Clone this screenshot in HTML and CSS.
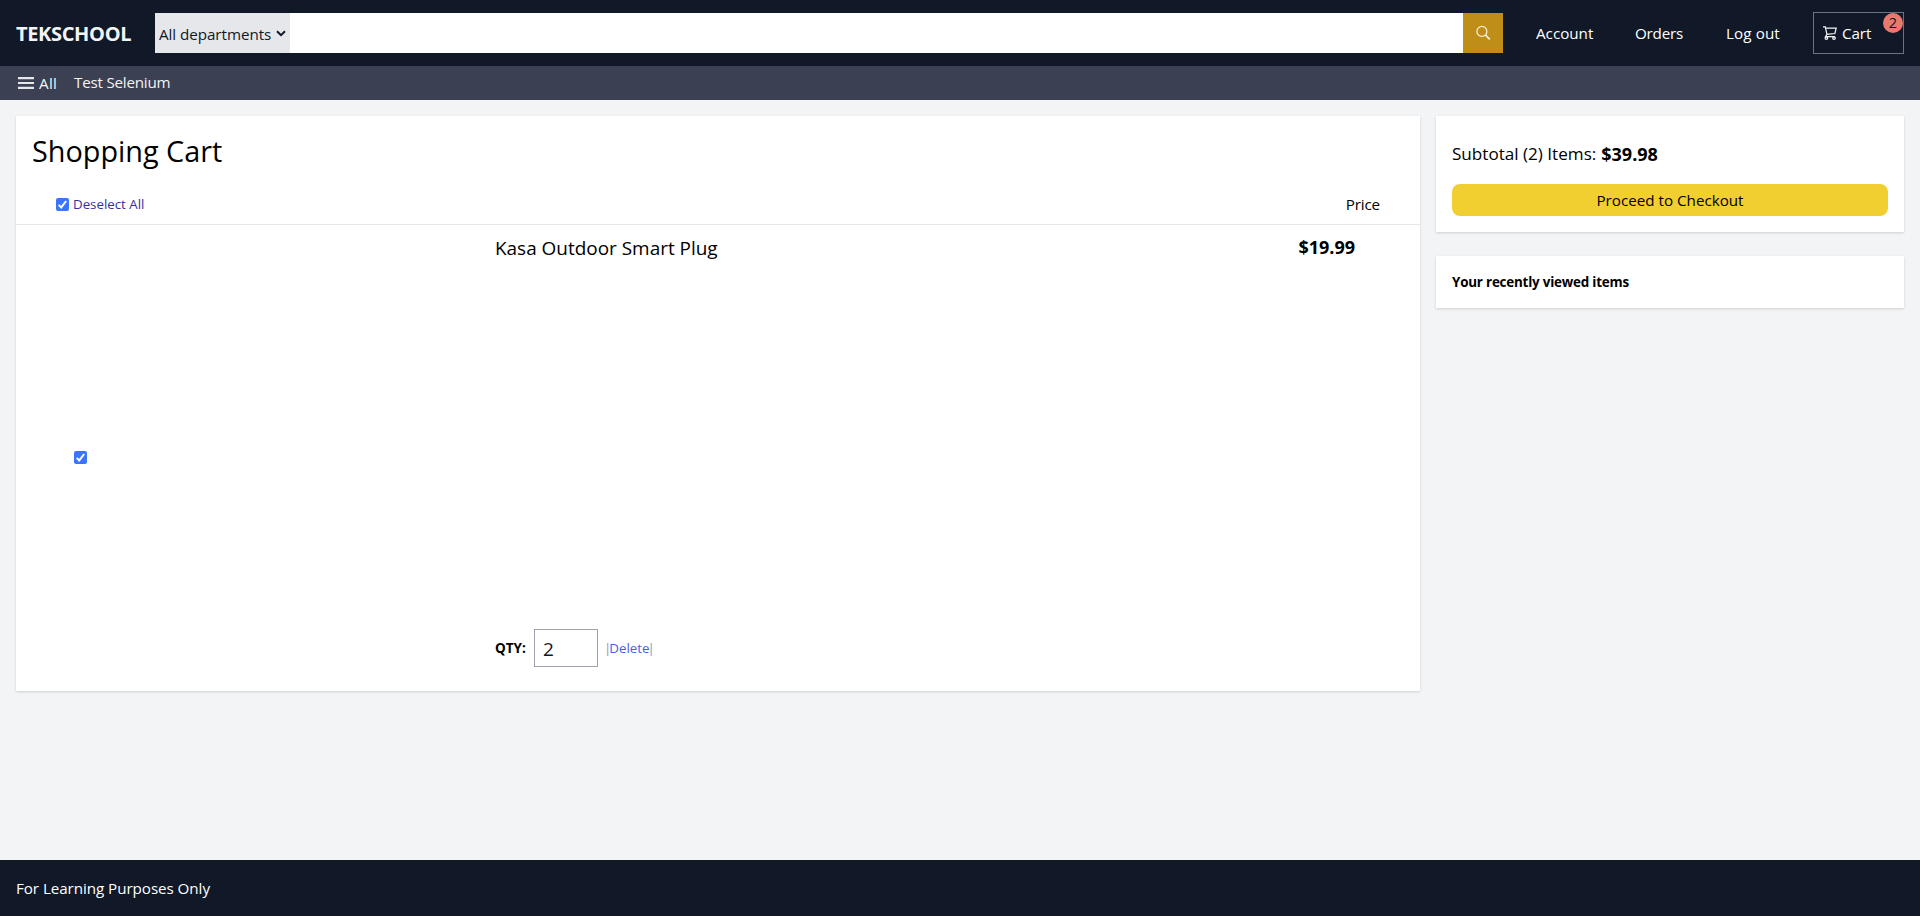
FILE: index.html
```html
<!DOCTYPE html>
<html lang="en">
<head>
<meta charset="utf-8">
<title>TEKSCHOOL</title>
<link rel="stylesheet" href="styles.css">
</head>
<body>
<header class="top">
  <a class="logo">TEKSCHOOL</a>
  <div class="search">
    <div class="dept"><span class="dept-label">All departments</span>
      <svg class="chevron" width="10" height="7" viewBox="0 0 10 7"><path d="M1 1.2 5 5.2 9 1.2" fill="none" stroke="#111827" stroke-width="2"/></svg>
    </div>
    <div class="search-field"></div>
    <button class="search-btn" aria-label="Search">
      <svg width="16" height="16" viewBox="0 0 16 16" fill="none" stroke="#f8f1de" stroke-width="1.2"><circle cx="6.9" cy="6.4" r="5"/><path d="M10.4 10 14.8 14.4" stroke-width="1.7"/></svg>
    </button>
  </div>
  <nav class="links">
    <a class="account">Account</a>
    <a class="orders">Orders</a>
    <a class="logout">Log out</a>
  </nav>
  <a class="cart">
    <svg width="14" height="14" viewBox="0 0 14 14" fill="none" stroke="#f3f4f6" stroke-width="1.2"><path d="M0 .9H2.3L4 8.7M2.7 2.2H13.2L11.9 7.5 3.8 8.3 2.6 10.6H12"/><circle cx="3.4" cy="12.1" r="1.3"/><circle cx="11" cy="12.1" r="1.3"/></svg>
    <span class="cart-label">Cart</span>
    <span class="badge">2</span>
  </a>
</header>
<div class="subnav">
  <svg width="16" height="12" viewBox="0 0 16 12" fill="#e5e7eb"><path d="M0 0h16v2.2H0zM0 4.9h16v2.2H0zM0 9.8h16v2.2H0z"/></svg>
  <span class="all">All</span>
  <span class="test">Test Selenium</span>
</div>
<main class="content">
  <section class="card basket">
    <h1 class="title">Shopping Cart</h1>
    <div class="head">
      <label class="deselect"><span class="check"><svg width="13" height="13" viewBox="0 0 13 13"><path d="M2.7 6.9 5.2 9.4 10.2 3" fill="none" stroke="#fff" stroke-width="2"/></svg></span><span class="deselect-label">Deselect All</span></label>
      <span class="price-head">Price</span>
    </div>
    <div class="item">
      <div class="pick"><span class="check"><svg width="13" height="13" viewBox="0 0 13 13"><path d="M2.7 6.9 5.2 9.4 10.2 3" fill="none" stroke="#fff" stroke-width="2"/></svg></span></div>
      <div class="details">
        <p class="name">Kasa Outdoor Smart Plug</p>
        <div class="qty"><span class="qty-label">QTY:</span><div class="qty-box">2</div><span class="delete"><span class="bar">|</span><span class="delete-label">Delete</span><span class="bar">|</span></span></div>
      </div>
      <p class="price">$19.99</p>
    </div>
  </section>
  <aside class="side">
    <section class="card summary">
      <p class="subtotal"><span class="subtotal-label">Subtotal (2) Items:</span><b>$39.98</b></p>
      <button class="checkout">Proceed to Checkout</button>
    </section>
    <section class="card recent">Your recently viewed items</section>
  </aside>
</main>
<footer class="footer">For Learning Purposes Only</footer>
</body>
</html>
```
FILE: styles.css
```css
* { box-sizing: border-box; margin: 0; }
body {
  height: 916px;
  display: flex;
  flex-direction: column;
  background: #f3f4f6;
  color: #000;
  font: 400 15.2px/24px "Open Sans", "Noto Sans", sans-serif;
}
button { border: 0; padding: 0; font: inherit; color: inherit; }
svg { display: block; flex: none; }
.top { height: 66px; flex: none; display: flex; align-items: center; padding: 0 16px; background: #111827; color: #fff; white-space: nowrap; }
.logo { width: 139px; padding-top: 2px; font-size: 20px; font-weight: 700; line-height: 28px; letter-spacing: -.34px; color: #f3f4f6; }
.search { width: 1348px; height: 40px; display: flex; background: #fff; }
.dept { width: 135px; display: flex; align-items: center; padding-left: 4px; gap: 4px; background: #e5e7eb; color: #111827; }
.dept-label { width: 113px; padding-top: 2px; letter-spacing: -.05px; }
.search-field { flex: 1; }
.search-btn { width: 40px; display: grid; place-items: center; background: #be8e18; }
.links { display: flex; margin-left: 33px; }
.account { width: 99px; }
.orders { width: 91px; letter-spacing: -.2px; }
.logout { width: 87px; letter-spacing: .1px; }
.cart { position: relative; width: 91px; height: 42px; display: flex; align-items: center; gap: 5px; padding-left: 9px; border: 1px solid #6b7280; }
.cart-label { letter-spacing: -.1px; }
.badge { position: absolute; top: 0; right: 0; width: 20px; height: 20px; border-radius: 50%; background: #e9786e; color: #111827; font-size: 14.5px; line-height: 20px; text-align: center; }
.subnav { height: 34px; flex: none; display: flex; align-items: center; padding-left: 18px; background: #3b4052; color: #f3f4f6; }
.all { margin-left: 5px; width: 35px; letter-spacing: .3px; }
.test { letter-spacing: -.22px; margin-top: -2px; }
.content { flex: 1; display: flex; align-items: flex-start; gap: 16px; padding: 16px; }
.card { background: #fff; box-shadow: 0 1px 3px rgba(0,0,0,.1), 0 1px 2px rgba(0,0,0,.06); }
.basket { width: 1404px; height: 575px; display: flex; flex-direction: column; }
.title { padding: 17px 16px 11px; font-size: 28.8px; font-weight: 400; line-height: 36px; }
.head { height: 45px; display: flex; justify-content: space-between; align-items: center; padding: 8px 40px 4px; border-bottom: 1px solid #e5e7eb; }
.deselect { display: flex; align-items: center; gap: 4px; }
.deselect-label { font-size: 13.3px; line-height: 20px; color: #3730a3; }
.price-head { letter-spacing: -.15px; }
.check { display: block; width: 13px; height: 13px; border-radius: 2px; background: #3b75ff; }
.item { flex: 1; display: flex; padding: 8px 65px 24px 58px; }
.pick { width: 421px; display: flex; align-items: center; padding-top: 14px; }
.details { flex: 1; display: flex; flex-direction: column; justify-content: space-between; }
.name { padding-top: 1px; font-size: 18.95px; line-height: 28px; }
.price { font-size: 18px; font-weight: 700; line-height: 28px; }
.qty { display: flex; align-items: center; font-size: 14px; line-height: 20px; }
.qty-label { width: 39px; font-size: 13.5px; font-weight: 700; }
.qty-box { width: 64px; height: 38px; padding: 2px 8px 0; border: 1px solid #9ca3af; font-size: 19px; line-height: 34px; color: #111827; }
.delete { margin-left: 8px; display: flex; font-size: 13.3px; color: #4361ee; }
.bar { margin: 0 -2px; color: #8b95b5; }
.side { flex: 1; display: flex; flex-direction: column; gap: 24px; }
.summary { height: 116px; padding: 24px 16px 16px; }
.subtotal { display: flex; gap: 5px; font-size: 18px; line-height: 28px; }
.subtotal-label { font-size: 17.1px; }
.checkout { display: block; width: 100%; height: 32px; margin-top: 16px; border-radius: 8px; background: #f1cf30; }
.recent { height: 52px; padding: 16px; font-size: 13.4px; font-weight: 700; line-height: 20px; letter-spacing: -.2px; }
.footer { height: 56px; flex: none; padding: 16px; background: #111827; color: #fff; letter-spacing: -.06px; }
```
